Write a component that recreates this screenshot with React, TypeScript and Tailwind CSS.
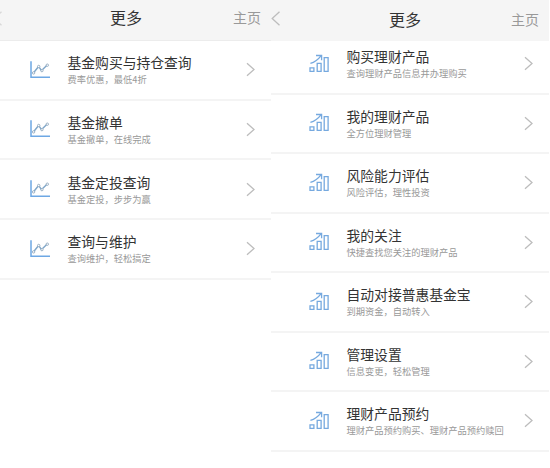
type Item = { title: string; desc: string };

const fundItems: Item[] = [
  { title: "基金购买与持仓查询", desc: "费率优惠，最低4折" },
  { title: "基金撤单", desc: "基金撤单，在线完成" },
  { title: "基金定投查询", desc: "基金定投，步步为赢" },
  { title: "查询与维护", desc: "查询维护，轻松搞定" },
];

const wealthItems: Item[] = [
  { title: "购买理财产品", desc: "查询理财产品信息并办理购买" },
  { title: "我的理财产品", desc: "全方位理财管理" },
  { title: "风险能力评估", desc: "风险评估，理性投资" },
  { title: "我的关注", desc: "快捷查找您关注的理财产品" },
  { title: "自动对接普惠基金宝", desc: "到期资金，自动转入" },
  { title: "管理设置", desc: "信息变更，轻松管理" },
  { title: "理财产品预约", desc: "理财产品预约购买、理财产品预约赎回" },
];

function LineChartIcon() {
  return (
    <svg width="22" height="20" viewBox="0 0 22 20" fill="none" className="shrink-0">
      <path d="M2 1.2v16h19" stroke="#6ea8e4" strokeWidth="1.5" />
      <path d="M5.2 12 9 7.3M10.3 7.3l2 3M13.6 9.6l3.9-3.8" stroke="#7fa6c9" strokeWidth="1.4" />
      <g stroke="#9ab0c4" strokeWidth="1">
        <circle cx="4.6" cy="12.9" r="1.2" />
        <circle cx="9.7" cy="6.5" r="1.2" />
        <circle cx="12.9" cy="10.6" r="1.2" />
        <circle cx="18.3" cy="5.2" r="1.2" />
      </g>
    </svg>
  );
}

function BarChartIcon() {
  return (
    <svg width="22" height="20" viewBox="0 0 22 20" fill="none" stroke="#76a9df" strokeWidth="1.3" className="shrink-0">
      <path d="M2 13.9h3.9v3.5H2zM9.2 9.3h3.9v8.1H9.2zM16.2 3.6h3.9v13.8h-3.9z" />
      <path d="M2.4 9.4C6.4 8.2 10 5.6 13 1.8M8 1.5h5.6v4.7" />
    </svg>
  );
}

function Chevron({ back = false }: { back?: boolean }) {
  return (
    <svg width="9" height="15" viewBox="0 0 9 15" fill="none" stroke="#bdbdbd" strokeWidth="1.3" className="shrink-0">
      <path d={back ? "M8.5 .8 1.2 7.5 8.5 14.2" : "M1 1.2 8 7.5 1 13.8"} />
    </svg>
  );
}

function FundRow({ item }: { item: Item }) {
  return (
    <li className="flex h-[59.65px] items-center border-b-2 border-[#f4f4f4] pr-[16px] pl-[29px]">
      <LineChartIcon />
      <RowText item={item} />
      <Chevron />
    </li>
  );
}

function WealthRow({ item }: { item: Item }) {
  return (
    <li className="flex h-[59.5px] items-center border-b-2 border-[#f4f4f4] pr-[16px] pl-[37px]">
      <BarChartIcon />
      <RowText item={item} />
      <Chevron />
    </li>
  );
}

function RowText({ item }: { item: Item }) {
  return (
    <div className="ml-[16.5px] flex-1 pt-px whitespace-nowrap">
      <p className="text-[13.8px] leading-[18px] text-[#333]">{item.title}</p>
      <p className="mt-px text-[9.25px] leading-[15px] text-[#999]">{item.desc}</p>
    </div>
  );
}

export default function App() {
  return (
    <div className="flex h-[468px] w-[550px] overflow-hidden bg-white font-['Noto_Sans_CJK_SC',sans-serif]">
      <section className="w-[271px]">
        <header className="grid h-[41px] grid-cols-[110px_1fr_auto] items-center border-b border-[#ececec] bg-[#f5f5f5] pr-[10px] pb-[7px]">
          <span className="-ml-[7.5px] pt-[4px] opacity-50">
            <Chevron back />
          </span>
          <h1 className="text-[16px] leading-6 text-[#333]">更多</h1>
          <span className="text-[14px] leading-5 text-[#999]">主页</span>
        </header>
        <ul>
          {fundItems.map((item) => (
            <FundRow key={item.title} item={item} />
          ))}
        </ul>
      </section>
      <section className="w-[278px]">
        <header className="relative z-10 grid h-[41px] grid-cols-[1fr_auto_1fr] items-center bg-[#f5f5f5] pr-[10px] pb-[4px]">
          <Chevron back />
          <h1 className="text-[16px] leading-6 text-[#333]">更多</h1>
          <span className="justify-self-end text-[14px] leading-5 text-[#999]">主页</span>
        </header>
        <ul className="-mt-[6px]">
          {wealthItems.map((item) => (
            <WealthRow key={item.title} item={item} />
          ))}
        </ul>
      </section>
    </div>
  );
}
